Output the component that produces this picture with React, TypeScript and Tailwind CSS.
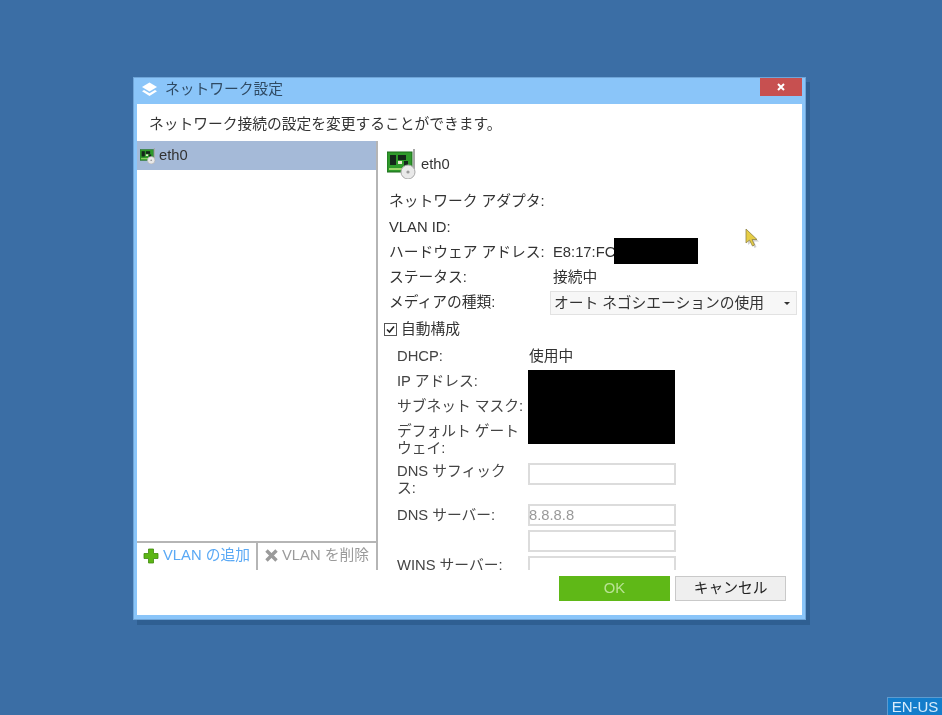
import React from 'react';

const font = 'font-["Liberation_Sans","Noto_Sans_CJK_JP",sans-serif]';

function NicIcon({ size }: { size: number }) {
    return (
        <svg width={size} height={size} viewBox="0 0 30 30" className="shrink-0">
            <rect x="0" y="3" width="25" height="20" fill="#2f9a2b" stroke="#1c6b1c" strokeWidth="1" />
            <rect x="3" y="6" width="6" height="10" fill="#14261a" />
            <rect x="11" y="6" width="8" height="5" fill="#14261a" />
            <rect x="11" y="12" width="4" height="3" fill="#e8e8d0" />
            <rect x="17" y="12" width="4" height="6" fill="#14261a" />
            <rect x="2" y="19" width="14" height="2" fill="#9ed66a" />
            <rect x="26" y="0" width="2" height="20" fill="#a8a8a8" />
            <circle cx="21" cy="23" r="7" fill="#e9e9e9" stroke="#a9a9a9" strokeWidth="1" />
            <circle cx="21" cy="23" r="1.6" fill="#9a9a9a" />
        </svg>
    );
}

function Label({ children }: { children: React.ReactNode }) {
    return <div className="w-[164px] shrink-0 whitespace-nowrap text-[#333]">{children}</div>;
}

function SubLabel({ children }: { children: React.ReactNode }) {
    return <div className="mr-[4px] w-[127px] shrink-0 leading-[17px] text-[#444]">{children}</div>;
}

function Input({ value }: { value?: string }) {
    return (
        <div className="flex h-[22px] w-[148px] items-center border-2 border-[#dcdcdc] bg-white text-[#999]">
            <span className="-ml-[1px]">{value}</span>
        </div>
    );
}

export default function App() {
    return (
        <div className={`relative h-[715px] w-[942px] overflow-hidden bg-[#3b6ea5] text-[14.75px] blur-[0.5px] ${font}`}>
            {/* dialog */}
            <div className="absolute left-[133px] top-[77px] flex h-[543px] w-[673px] flex-col bg-[#8ac5f9] shadow-[inset_0_0_0_1px_#6fa5d8,4px_5px_0_#2f5f92]">
                <div className="flex h-[27px] shrink-0 items-center pb-[2px] pl-[8px]">
                    <svg width="17" height="17" viewBox="0 0 17 17">
                        <path d="M8.5 1.5 L16 6 L8.5 10.5 L1 6 Z" fill="#fff" />
                        <path d="M3 9 L8.5 12.3 L14 9 L16 10.3 L8.5 15 L1 10.3 Z" fill="#fff" />
                    </svg>
                    <span className="ml-[7px] text-[#2f4a63]">ネットワーク設定</span>
                    <button className="ml-auto mr-[4px] mt-[1px] flex h-[18px] w-[42px] items-center justify-center self-start bg-[#c75050] text-white">
                        <svg width="10" height="10" viewBox="0 0 10 10">
                            <path d="M2 2 L8 8 M8 2 L2 8" stroke="#fff" strokeWidth="2" />
                        </svg>
                    </button>
                </div>
                <div className="mx-[4px] flex h-[511px] flex-col bg-white">
                    <div className="h-[37px] shrink-0 whitespace-nowrap pl-[12px] pt-[10px] leading-[20px] text-[#333]">
                        ネットワーク接続の設定を変更することができます。
                    </div>
                    <div className="flex h-[429px] shrink-0">
                        {/* adapter list */}
                        <div className="flex w-[241px] shrink-0 flex-col border-r-2 border-[#b5b5b5]">
                            <div className="flex h-[29px] shrink-0 items-center gap-[3px] bg-[#a5bad8] pl-[3px] text-[#333]">
                                <NicIcon size={16} />
                                eth0
                            </div>
                            <div className="flex-1" />
                            <div className="flex h-[29px] shrink-0 border-t-2 border-[#b5b5b5]">
                                <div className="flex w-[119px] items-center gap-[4px] pb-[2px] pl-[6px] text-[#5aa9f5]">
                                    <svg width="16" height="16" viewBox="0 0 16 16" className="shrink-0">
                                        <path d="M5.5 1 H10.5 V5.5 H15 V10.5 H10.5 V15 H5.5 V10.5 H1 V5.5 H5.5 Z" fill="#5cb615" stroke="#3f8a0c" strokeWidth="0.8" />
                                    </svg>
                                    <span className="whitespace-nowrap">VLAN の追加</span>
                                </div>
                                <div className="flex flex-1 items-center gap-[3px] border-l-2 border-[#b5b5b5] pb-[2px] pl-[6px] text-[#9a9a9a]">
                                    <svg width="15" height="15" viewBox="0 0 15 15" className="shrink-0">
                                        <path d="M2.5 2.5 L12.5 12.5 M12.5 2.5 L2.5 12.5" stroke="#9a9a9a" strokeWidth="3.4" />
                                    </svg>
                                    <span className="whitespace-nowrap">VLAN を削除</span>
                                </div>
                            </div>
                        </div>
                        {/* details */}
                        <div className="flex min-w-0 flex-1 flex-col overflow-hidden pl-[9px]">
                            <div className="mt-[9px] flex h-[28px] shrink-0 items-center gap-[4px] text-[#333]">
                                <NicIcon size={30} />
                                eth0
                            </div>
                            <div className="mt-[11px] flex h-[25px] shrink-0 items-center pl-[2px]"><Label>ネットワーク アダプタ:</Label></div>
                            <div className="mt-[1px] flex h-[25px] shrink-0 items-center pl-[2px]"><Label>VLAN ID:</Label></div>
                            <div className="flex h-[25px] shrink-0 items-center pl-[2px] text-[#333]">
                                <Label>ハードウェア アドレス:</Label>
                                <span>E8:17:FC</span>
                                <div className="-ml-[1px] -mt-[3px] h-[26px] w-[84px] shrink-0 bg-black" />
                            </div>
                            <div className="flex h-[25px] shrink-0 items-center pl-[2px] text-[#333]">
                                <Label>ステータス:</Label>
                                接続中
                            </div>
                            <div className="flex h-[25px] shrink-0 items-center pl-[2px]">
                                <Label>メディアの種類:</Label>
                                <div className="-ml-[3px] mt-[1px] flex h-[24px] w-[247px] shrink-0 items-center justify-between whitespace-nowrap border border-[#e2e2e2] bg-[#f7f7f7] pl-[3px] pr-[6px] text-[#333]">
                                    オート ネゴシエーションの使用
                                    <span className="h-0 w-0 border-x-[3px] border-t-[3px] border-x-transparent border-t-[#333]" />
                                </div>
                            </div>
                            <div className="mt-[2px] flex h-[24px] shrink-0 items-center gap-[4px] text-[#333]">
                                <div className="-ml-[3px] flex h-[13px] w-[13px] items-center justify-center border border-[#555] bg-white">
                                    <svg width="9" height="9" viewBox="0 0 9 9">
                                        <path d="M1 4.5 L3.5 7 L8 1.5" fill="none" stroke="#222" strokeWidth="1.6" />
                                    </svg>
                                </div>
                                自動構成
                            </div>
                            <div className="relative flex flex-col pl-[10px]">
                                <div className="mt-[3px] flex h-[24px] shrink-0 items-center">
                                    <SubLabel>DHCP:</SubLabel>
                                    <span className="ml-[1px] text-[#333]">使用中</span>
                                </div>
                                <div className="mt-[1px] flex h-[24px] shrink-0 items-center"><SubLabel>IP アドレス:</SubLabel></div>
                                <div className="mt-[1px] flex h-[24px] shrink-0 items-center"><SubLabel>サブネット マスク:</SubLabel></div>
                                <div className="mt-[4px] flex h-[35px] shrink-0 items-center"><SubLabel>デフォルト ゲートウェイ:</SubLabel></div>
                                <div className="mt-[6px] flex h-[35px] shrink-0 items-start">
                                    <SubLabel>DNS サフィックス:</SubLabel>
                                    <Input />
                                </div>
                                <div className="mt-[6px] flex h-[22px] shrink-0 items-center">
                                    <SubLabel>DNS サーバー:</SubLabel>
                                    <Input value="8.8.8.8" />
                                </div>
                                <div className="mt-[4px] flex h-[22px] shrink-0 items-center pl-[131px]">
                                    <Input />
                                </div>
                                <div className="mt-[4px] flex h-[22px] shrink-0 items-start">
                                    <div className="w-[131px] shrink-0 pt-[1px] leading-[17px] text-[#444]">WINS サーバー:</div>
                                    <Input />
                                </div>
                                {/* redacted block */}
                                <div className="absolute left-[141px] top-[29px] h-[74px] w-[147px] bg-black" />
                            </div>
                        </div>
                    </div>
                    <div className="flex flex-1 items-start justify-end gap-[5px] pr-[16px] pt-[6px]">
                        <button className="h-[25px] w-[111px] bg-[#5fb817] text-[#b9e394]">OK</button>
                        <button className="h-[25px] w-[111px] border border-[#c9c9c9] bg-[#efefef] text-[#222]">キャンセル</button>
                    </div>
                </div>
            </div>

            {/* mouse pointer */}
            <svg width="18" height="24" viewBox="0 0 18 24" className="absolute left-[744px] top-[227px]">
                <path d="M4 4 L4 18 L7.5 15 L10.5 21 L12.5 20 L10 14.5 L15 14.5 Z" fill="#777" opacity="0.35" />
                <path d="M2 2 L2 16 L5.5 13 L8.5 19 L10.5 18 L8 12.5 L13 12.5 Z" fill="#e6cd45" stroke="#8f8448" strokeWidth="0.8" />
            </svg>

            {/* keyboard layout */}
            <div className="absolute bottom-0 right-0 flex h-[18px] w-[55px] items-center justify-center border border-b-0 border-r-0 border-[#5d9bd0] bg-[#137dcb] pt-[1px] text-[15px] text-[#d8ecfb]">
                EN-US
            </div>
        </div>
    );
}
